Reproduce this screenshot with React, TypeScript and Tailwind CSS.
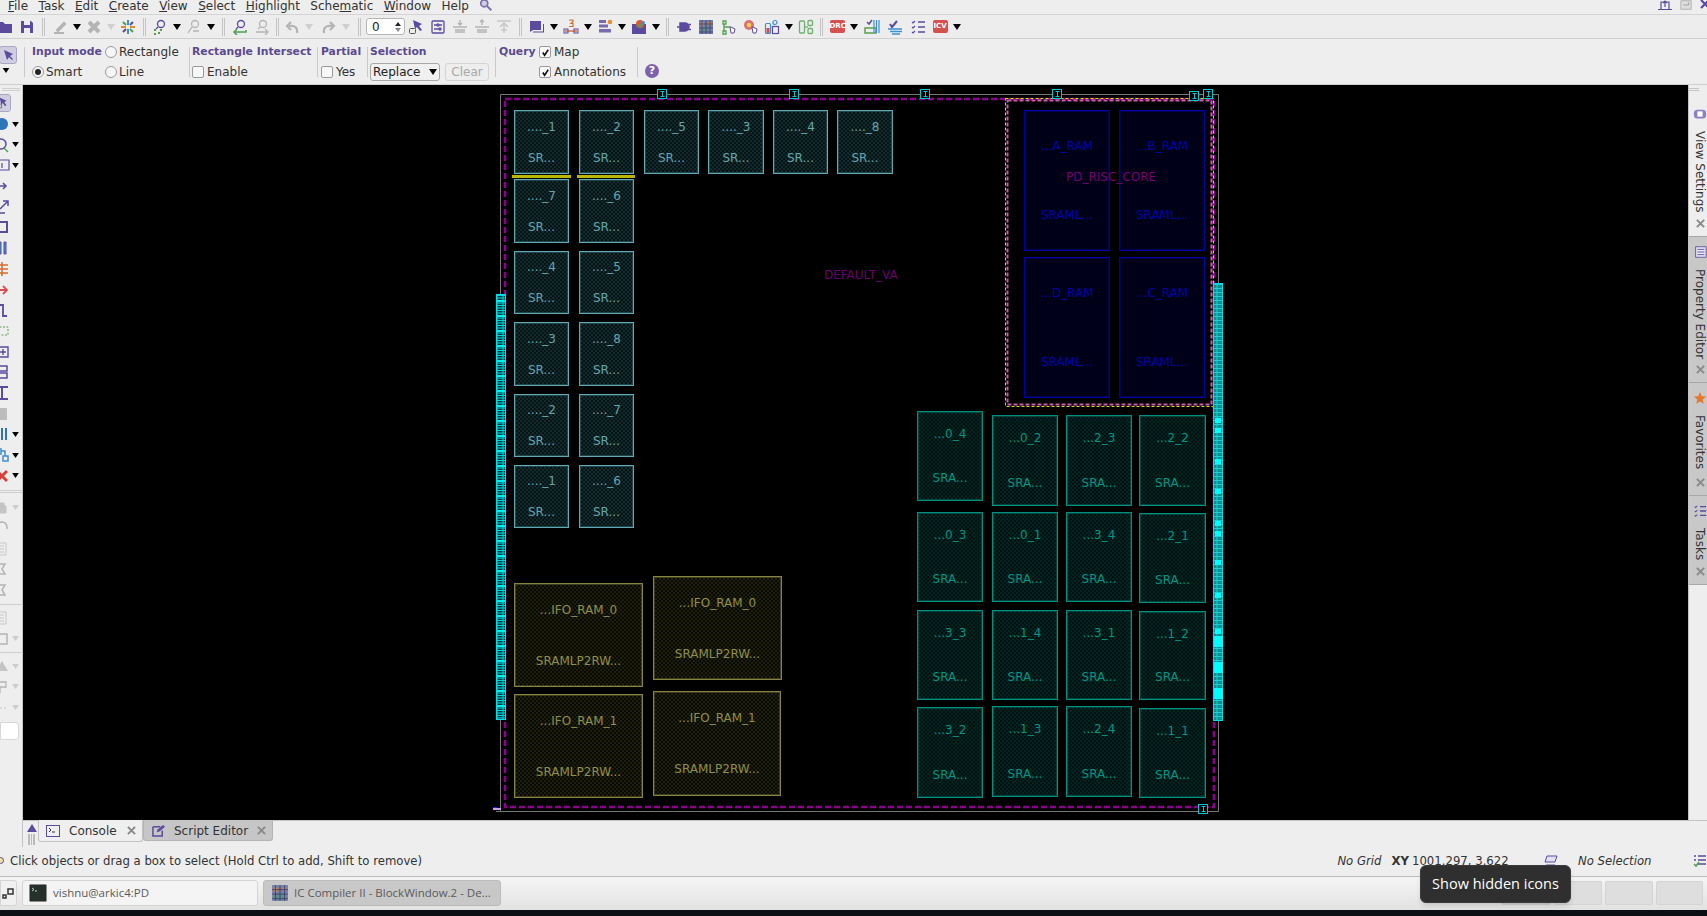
import React from 'react';

const P = '#5b4a9e';
const G = '#b4b4b4';

type Macro = { x: number; y: number; x2: number; y2: number; top: string };

const KIND = {
  sr: {
    box: 'border-[#62a9b3] shadow-[inset_0_0_0_1px_#1f454b] bg-[#061416] bg-[radial-gradient(circle,#3f7a82_0.55px,transparent_0.75px),radial-gradient(circle,#3f7a82_0.55px,transparent_0.75px)] bg-[length:4px_4px] bg-[position:0_0,2px_2px] text-[#62a6af]',
    bottom: 'SR...',
  },
  sra: {
    box: 'border-[#008f80] shadow-[inset_0_0_0_1px_#00443c] bg-[#001210] bg-[radial-gradient(circle,#006a5e_0.55px,transparent_0.75px),radial-gradient(circle,#006a5e_0.55px,transparent_0.75px)] bg-[length:4px_4px] bg-[position:0_0,2px_2px] text-[#009584]',
    bottom: 'SRA...',
  },
  ram: {
    box: 'border-[#0000a6] shadow-[inset_0_0_0_1px_#000050] bg-[#00000e] bg-[radial-gradient(circle,#000060_0.55px,transparent_0.75px),radial-gradient(circle,#000060_0.55px,transparent_0.75px)] bg-[length:4px_4px] bg-[position:0_0,2px_2px] text-[#0000b0]',
    bottom: 'SRAML...',
  },
  fifo: {
    box: 'border-[#85853f] shadow-[inset_0_0_0_1px_#3c3c1c] bg-[#0a0a04] bg-[radial-gradient(circle,#6a6a32_0.55px,transparent_0.75px),radial-gradient(circle,#6a6a32_0.55px,transparent_0.75px)] bg-[length:4px_4px] bg-[position:0_0,2px_2px] text-[#8f8f48]',
    bottom: 'SRAMLP2RW...',
  },
};

const m = (x: number, y: number, x2: number, y2: number, top: string): Macro => ({ x, y, x2, y2, top });

const SR_MACROS = [
  m(514, 110, 568, 173, '...._1'),
  m(579, 110, 633, 173, '...._2'),
  m(644, 110, 698, 173, '...._5'),
  m(708, 110, 763, 173, '...._3'),
  m(773, 110, 827, 173, '...._4'),
  m(837, 110, 892, 173, '...._8'),
  m(514, 179, 568, 242, '...._7'),
  m(579, 179, 633, 242, '...._6'),
  m(514, 251, 568, 313, '...._4'),
  m(579, 251, 633, 313, '...._5'),
  m(514, 322, 568, 385, '...._3'),
  m(579, 322, 633, 385, '...._8'),
  m(514, 394, 568, 456, '...._2'),
  m(579, 394, 633, 456, '...._7'),
  m(514, 465, 568, 527, '...._1'),
  m(579, 465, 633, 527, '...._6'),
];

const SRA_MACROS = [
  m(917, 411, 982, 500, '...0_4'),
  m(992, 415, 1057, 505, '...0_2'),
  m(1066, 415, 1131, 505, '...2_3'),
  m(1139, 415, 1205, 505, '...2_2'),
  m(917, 512, 982, 601, '...0_3'),
  m(992, 512, 1057, 601, '...0_1'),
  m(1066, 512, 1131, 601, '...3_4'),
  m(1139, 513, 1205, 602, '...2_1'),
  m(917, 610, 982, 699, '...3_3'),
  m(992, 610, 1057, 699, '...1_4'),
  m(1066, 610, 1131, 699, '...3_1'),
  m(1139, 611, 1205, 699, '...1_2'),
  m(917, 707, 982, 797, '...3_2'),
  m(992, 706, 1057, 796, '...1_3'),
  m(1066, 706, 1131, 796, '...2_4'),
  m(1139, 708, 1205, 797, '...1_1'),
];

const RAM_MACROS = [
  m(1024, 110, 1109, 250, '...A_RAM'),
  m(1119, 110, 1204, 250, '...B_RAM'),
  m(1024, 257, 1109, 397, '...D_RAM'),
  m(1119, 257, 1204, 397, '...C_RAM'),
];

const FIFO_MACROS = [
  m(514, 583, 642, 686, '...IFO_RAM_0'),
  m(653, 576, 781, 679, '...IFO_RAM_0'),
  m(514, 694, 642, 797, '...IFO_RAM_1'),
  m(653, 691, 780, 795, '...IFO_RAM_1'),
];

const TERMINALS = [
  [662, 94],
  [794, 94],
  [925, 94],
  [1057, 94],
  [1194, 96],
  [1208, 94],
  [1203, 809],
];

const RIGHT_DOTS = [418, 428, 459, 489, 521, 531, 560, 593, 629];
const LEFT_BARS = Array.from({ length: 28 }, (_, i) => 300 + i * 15);

function MacroBox({ macro, kind }: { macro: Macro; kind: keyof typeof KIND }) {
  return (
    <div
      className={`absolute flex flex-col items-center justify-around border text-[12px] leading-none whitespace-nowrap ${KIND[kind].box}`}
      style={{ left: macro.x - 23, top: macro.y - 85, width: macro.x2 - macro.x + 1, height: macro.y2 - macro.y + 1 }}
    >
      <span>{macro.top}</span>
      <span>{KIND[kind].bottom}</span>
    </div>
  );
}

function Floorplan() {
  return (
    <svg viewBox="23 85 1665 735" className="absolute inset-0 w-[1665px] h-[735px]">
      <defs>
        <pattern id="stripL" width="10" height="5" patternUnits="userSpaceOnUse">
          <rect width="10" height="5" fill="#04383c" />
          <path d="M0 .5H10M0 3H10M3 0V5M7 0V5" stroke="#00d8e0" strokeWidth="1" />
        </pattern>
        <pattern id="stripR" width="10" height="4" patternUnits="userSpaceOnUse">
          <rect width="10" height="4" fill="#08908f" />
          <path d="M0 .5H10M3 0V4M7 0V4" stroke="#10d4d8" strokeWidth="1" />
        </pattern>
      </defs>
      <path d="M500.5 294V94.5H1218.5V283M1218.5 721V811.5H496M500.5 720V811" fill="none" stroke="#777" />
      <rect x="505" y="99" width="709" height="708" fill="none" stroke="#8c0090" strokeWidth="2.6" strokeDasharray="6 3" />
      <rect x="1005.5" y="98.5" width="208" height="308" fill="none" stroke="#d8d800" strokeDasharray="3 2" />
      <rect x="1007.5" y="100.5" width="204" height="304" fill="none" stroke="#c85ca8" strokeWidth="2" strokeDasharray="4 2" />
      <rect x="512" y="175" width="59" height="3" fill="#b8b800" />
      <rect x="577" y="175" width="58" height="3" fill="#b8b800" />
      <rect x="493" y="808" width="8" height="2" fill="#c8a0e8" />
      <rect x="493" y="807" width="4" height="1" fill="#2020e0" />
      <rect x="496.5" y="294.5" width="9" height="425" fill="url(#stripL)" stroke="#00e0e8" />
      {LEFT_BARS.map((y) => (
        <rect key={y} x="497" y={y} width="8" height="2" fill="#00f0f0" />
      ))}
      <rect x="1213.5" y="283.5" width="9" height="437" fill="url(#stripR)" stroke="#00e0e8" />
      {RIGHT_DOTS.map((y) => (
        <rect key={y} x="1215" y={y} width="6" height="5" fill="#00ffff" />
      ))}
      <rect x="1214" y="636" width="9" height="11" fill="#00ffff" />
      <rect x="1214" y="662" width="9" height="11" fill="#00ffff" />
      <rect x="1214" y="688" width="9" height="11" fill="#00ffff" />
      {TERMINALS.map(([x, y]) => (
        <g key={`${x}-${y}`} fill="none" stroke="#00c8d0">
          <rect x={x - 4.5} y={y - 4.5} width="9" height="9" fill="#000" />
          <path d={`M${x - 1.5} ${y - 2.5}H${x + 2.5}M${x + 0.5} ${y - 2.5}V${y + 2.5}M${x - 1.5} ${y + 2.5}H${x + 2.5}`} />
        </g>
      ))}
    </svg>
  );
}

function Canvas() {
  return (
    <div className="relative flex-1 bg-black overflow-hidden font-['DejaVu_Sans',sans-serif]">
      {FIFO_MACROS.map((x, i) => <MacroBox key={i} macro={x} kind="fifo" />)}
      {SR_MACROS.map((x, i) => <MacroBox key={i} macro={x} kind="sr" />)}
      {SRA_MACROS.map((x, i) => <MacroBox key={i} macro={x} kind="sra" />)}
      {RAM_MACROS.map((x, i) => <MacroBox key={i} macro={x} kind="ram" />)}
      <Floorplan />
      <span className="absolute left-[801px] top-[181px] text-[12px] leading-[18px] text-[#6a006e]">DEFAULT_VA</span>
      <span className="absolute left-[1043px] top-[83px] text-[12px] leading-[18px] text-[#760076]">PD_RISC_CORE</span>
    </div>
  );
}

const ICONS: Record<string, React.ReactNode> = {
  folder: <path d="M1 3h5l2 2h7v9H1z" fill={P} />,
  save: <path d="M2 2h10l2 2v10H2zM5 2v4h6V2zM5 9v5h6V9z" fill={P} fillRule="evenodd" />,
  pencil: <path d="M2 14h10M5 11l7-7 1 1-7 7z" stroke={G} strokeWidth="2" fill="none" />,
  del: <path d="M3 3l10 10M13 3L3 13" stroke={G} strokeWidth="4" />,
  star: (
    <g strokeWidth="2">
      <path d="M8 1v5M8 10v5" stroke="#3f8fd0" />
      <path d="M1 8h5M10 8h5" stroke="#e08a30" />
      <path d="M3 3l3 3M10 10l3 3" stroke="#50a050" />
      <path d="M13 3l-3 3M6 10l-3 3" stroke={P} />
    </g>
  ),
  zoomDots: (
    <g>
      <circle cx="9" cy="5" r="3.5" fill="none" stroke={P} strokeWidth="1.3" />
      <path d="M6 8l-2 2" stroke={P} strokeWidth="1.3" />
      <path d="M2 10h2v2H2zM8 10h2v2H8zM2 14h2v2H2zM6 13h2v2H6z" fill="#4fa04f" />
    </g>
  ),
  zoomOff: (
    <g fill="none" stroke={G} strokeWidth="1.3">
      <circle cx="9" cy="5" r="3.5" />
      <path d="M6 8l-4 6M7 12h6" />
    </g>
  ),
  zoomBack: (
    <g fill="none">
      <circle cx="9" cy="5" r="3.5" stroke={P} strokeWidth="1.3" />
      <path d="M6 8l-2 2" stroke={P} strokeWidth="1.3" />
      <path d="M14 11v2H3M5 10l-3 3 3 3" stroke="#4fa04f" strokeWidth="1.5" />
    </g>
  ),
  zoomBackOff: (
    <g fill="none" stroke={G} strokeWidth="1.3">
      <circle cx="9" cy="5" r="3.5" />
      <path d="M6 8l-2 2M2 13h11M11 10l3 3-3 3" />
    </g>
  ),
  undo: <path d="M13 14c1-5-2-8-8-7M7 3L3 7l4 4" fill="none" stroke={G} strokeWidth="2.2" />,
  redo: <path d="M3 14C2 9 5 6 11 7M9 3l4 4-4 4" fill="none" stroke={G} strokeWidth="2.2" />,
  pick: (
    <g>
      <rect x="1.5" y="9.5" width="6" height="5" rx="1" fill="none" stroke="#555" />
      <path d="M5 1l9 4-3 2 3 4-2 1-3-4-2 2z" fill={P} />
    </g>
  ),
  panel: (
    <g fill="none" stroke={P} strokeWidth="1.3">
      <rect x="2" y="2" width="12" height="12" rx="1" />
      <path d="M4 6h3M9 6h3M4 10h5" />
      <circle cx="8" cy="6" r="1" />
      <circle cx="10" cy="10" r="1" />
    </g>
  ),
  alignV: <path d="M1 8h14M3 11h10M3 13h10M8 1v5M6 4l2 2 2-2" fill="none" stroke={G} strokeWidth="1.4" />,
  alignU: <path d="M1 8h14M3 11h10M3 13h10M8 6V1M6 3l2-2 2 2" fill="none" stroke={G} strokeWidth="1.4" />,
  alignT: <path d="M1 2h14M8 14V4M4 8l4-4 4 4M5 11h6" fill="none" stroke="#c8c8c8" strokeWidth="1.6" />,
  chat: (
    <g fill={P}>
      <path d="M1 2h11v9H4l-3 2z" />
      <path d="M4 13.500h11V5h-1v7.500H4z" />
    </g>
  ),
  ruler: (
    <g fill="none">
      <path d="M2 12h12" stroke="#d86a30" strokeWidth="1.4" />
      <rect x="1" y="10" width="4" height="4" stroke={P} />
      <rect x="11" y="10" width="4" height="4" stroke={P} />
      <path d="M6 1h4v1.500L8 4.500h2v3H6" stroke="#d86a30" strokeWidth="1.2" />
    </g>
  ),
  bars: (
    <g>
      <path d="M2 1h7v3H2zM2 5.500h9v3H2zM2 10h12v3.500H2z" fill={P} opacity="0.8" />
      <circle cx="13" cy="3" r="2.3" fill="#e8902c" />
    </g>
  ),
  camera: (
    <g>
      <path d="M1 5h14v10H1z" fill={P} />
      <circle cx="9" cy="5" r="4" fill="#e05a30" />
      <circle cx="12" cy="4" r="2" fill="#3f8fd0" />
      <circle cx="9" cy="7" r="2" fill="#50a050" />
    </g>
  ),
  plug: <path d="M1 8h3M4 4h5a4 4 0 010 8H4zM12 5.500h3M12 10.500h3" fill={P} stroke={P} strokeWidth="1.5" />,
  grid: (
    <g>
      <rect x="1" y="1" width="14" height="14" fill="#6f7fa8" />
      <path d="M3 3h3v4H3zM10 3h3v3h-3z" fill="#d8803a" />
      <path d="M7 8h3v5H7zM3 10h2v3H3z" fill="#4f9a60" />
      <path d="M4 1v14M8 1v14M12 1v14M1 5h14M1 9h14M1 13h14" stroke="#3f3a68" strokeWidth="0.7" />
    </g>
  ),
  hand: (
    <g fill="none">
      <path d="M3 2h3v3H3zM3 12h3v3H3z" stroke="#4fa04f" strokeWidth="1.3" />
      <path d="M4 5v7M4 8h6" stroke="#4fa04f" strokeWidth="1.3" />
      <path d="M10 8l1 6h3l1-4-4-2z" fill="#fff" stroke={P} />
    </g>
  ),
  burst: (
    <g>
      <circle cx="7" cy="6" r="5" fill="#d85a5a" opacity="0.85" />
      <circle cx="7" cy="6" r="2.2" fill="#f2d24a" />
      <path d="M10 8l1 6h3l1-4-4-2z" fill="#fff" stroke={P} />
    </g>
  ),
  bottle: (
    <g fill="none" strokeWidth="1.2">
      <rect x="1.5" y="4.500" width="5" height="10" rx="1" stroke="#3f8fd0" />
      <rect x="2.5" y="9" width="3" height="5" fill="#d84a4a" />
      <rect x="9" y="1.500" width="4" height="4" rx="2" stroke="#3f8fd0" />
      <rect x="8.5" y="7.500" width="6" height="7" stroke={P} />
    </g>
  ),
  tree: (
    <g fill="none" stroke="#6fb06f" strokeWidth="1.3">
      <rect x="1.5" y="2" width="5" height="12" rx="1" />
      <rect x="10" y="1.500" width="4.500" height="5" rx="1" />
      <rect x="10" y="9.500" width="4.500" height="5" rx="1" />
      <path d="M7 8h3" />
    </g>
  ),
  layersCheck: (
    <g fill="none">
      <path d="M1 9h11v5H1z" stroke="#5aa04f" strokeWidth="1.5" />
      <path d="M3 3l2 2 3-4" stroke={P} strokeWidth="1.5" />
      <path d="M10 1v13M12.500 1v13M15 1v13" stroke="#3f8fd0" strokeWidth="1.2" />
    </g>
  ),
  layersDone: (
    <g fill="none">
      <path d="M3 5l2 3 5-6" stroke={P} strokeWidth="2" />
      <path d="M1 10h14M3 12.500h12M5 15h8" stroke="#3f8fd0" strokeWidth="1.6" />
    </g>
  ),
  tasks: (
    <g fill="none" stroke={P} strokeWidth="1.2">
      <path d="M2 3l1 1 2-2M2 8l1 1 2-2M2 13l1 1 2-2" />
      <path d="M8 3h7M8 8h7M8 13h7" strokeWidth="1.5" />
    </g>
  ),
  bubble: <path d="M8 2a6 6 0 100 12A6 6 0 008 2z" fill="#2e74b8" />,
  zoom: (
    <g fill="none" stroke={P} strokeWidth="1.5">
      <circle cx="7" cy="7" r="5" />
      <path d="M10 11l4 4" stroke="#4fa04f" />
    </g>
  ),
  info: <path d="M1 3h14v10H1zM8 6v5" fill="none" stroke={P} strokeWidth="1.2" />,
  dotArrow: <path d="M2 8h10M9 5l3 3-3 3" fill="none" stroke={P} strokeWidth="1.5" />,
  expand: <path d="M2 5v9h9M6 10l8-8M9 2h5v5" fill="none" stroke={P} strokeWidth="1.5" />,
  box: <rect x="3" y="3" width="10" height="10" fill="none" stroke={P} strokeWidth="2" />,
  split: <path d="M2 2h5v12H2zM10 2h2v12h-2z" fill="#3f8fd0" stroke={P} />,
  stack: <path d="M2 4h12M2 8h12M2 12h12M8 1v14" stroke="#d86a30" strokeWidth="1.5" />,
  push: <path d="M1 8h12M9 4l4 4-4 4" fill="none" stroke="#d84f4f" strokeWidth="1.8" />,
  steps: <path d="M3 14V3h6v11h4" fill="none" stroke={P} strokeWidth="1.8" />,
  dashed: <rect x="2" y="4" width="12" height="8" fill="none" stroke="#5aa04f" strokeDasharray="2 1.5" />,
  add: <path d="M2 3h12v10H2zM6 8h6M9 5v6" fill="none" stroke={P} strokeWidth="1.4" />,
  rack: <path d="M3 2h10v5H3zM3 9h10v5H3z" fill="none" stroke={P} strokeWidth="1.5" />,
  pillar: <path d="M2 2h12M2 14h12M8 2v12" fill="none" stroke={P} strokeWidth="2" />,
  block: <rect x="3" y="2" width="10" height="12" fill="#bdbdbd" />,
  columns: <path d="M4 2v12M8 2v12M12 2v12" stroke="#2e74b8" strokeWidth="2" />,
  tree2: <path d="M2 2h5v5H2zM9 9h5v5H9zM7 4h4v5" fill="none" stroke="#3f8fd0" strokeWidth="1.5" />,
  redX: <path d="M3 3l10 10M13 3L3 13" stroke="#d8403a" strokeWidth="3" />,
  lock: <path d="M4 7h8v7H4zM6 7V4h4v3" fill="#c4c4c4" stroke="#c4c4c4" />,
  arc: <path d="M3 14V7a5 5 0 0110 0v2" fill="none" stroke={G} strokeWidth="1.5" />,
  doc: <path d="M4 2h8v12H4zM6 5h4M6 8h4M6 11h4" fill="none" stroke="#c8c8c8" />,
  hook: <path d="M5 3h6l-3 5 3 5H5" fill="none" stroke={G} strokeWidth="1.5" />,
  sq: <rect x="3" y="3" width="10" height="10" fill="none" stroke={G} strokeWidth="1.5" />,
  tri: <path d="M8 3l6 10H2z" fill="#c4c4c4" />,
  flag: <path d="M3 3h9v5H6v6" fill="none" stroke={G} strokeWidth="1.3" />,
  dots: <path d="M2 8h12" stroke="#c8c8c8" strokeDasharray="2 2" />,
};

function Ico({ n, size = 16 }: { n: string; size?: number }) {
  return (
    <svg viewBox="0 0 16 16" width={size} height={size} className="shrink-0">
      {ICONS[n]}
    </svg>
  );
}

const T = ({ n, wide }: { n: string; wide?: boolean }) => (
  <div className={`flex justify-center shrink-0 ${wide ? 'w-[23px]' : 'w-[22px]'}`}>
    <Ico n={n} />
  </div>
);

const Dd = ({ off }: { off?: boolean }) => (
  <div className="w-[12px] flex justify-center shrink-0">
    <svg viewBox="0 0 8 6" className="w-2 h-[6px]">
      <path d="M0 0h8L4 6z" fill={off ? '#cfcfcf' : '#000'} />
    </svg>
  </div>
);

const Sep = ({ className }: { className: string }) => (
  <div className={`flex justify-center shrink-0 ${className}`}>
    <div className="w-[3px] h-[18px] border-x border-[#c4c4c4]" />
  </div>
);

const Label = ({ text }: { text: React.ReactNode }) => <span className="text-[#333] whitespace-nowrap">{text}</span>;

const Radio = ({ on }: { on?: boolean }) => (
  <span className="w-3 h-3 rounded-full border border-[#9a9a9a] bg-[#f6f6f6] flex items-center justify-center shrink-0">
    {on && <span className="w-[6px] h-[6px] rounded-full bg-[#222]" />}
  </span>
);

const Check = ({ on }: { on?: boolean }) => (
  <span className="w-3 h-3 rounded-[2px] border border-[#9a9a9a] bg-[#f8f8f8] flex items-center justify-center shrink-0">
    {on && (
      <svg viewBox="0 0 10 10" className="w-[9px] h-[9px]">
        <path d="M2 5l2 3 4-6" fill="none" stroke="#111" strokeWidth="1.8" />
      </svg>
    )}
  </span>
);

const Head = ({ children }: { children: React.ReactNode }) => (
  <span className="font-bold text-[10.8px] whitespace-nowrap text-[#5b4a8f]">{children}</span>
);

const VDiv = () => <div className="w-px h-[30px] self-center bg-[#c9c9c9] shrink-0" />;

const MENUS: [string, string, string][] = [
  ['', 'F', 'ile'],
  ['', 'T', 'ask'],
  ['', 'E', 'dit'],
  ['', 'C', 'reate'],
  ['', 'V', 'iew'],
  ['', 'S', 'elect'],
  ['', 'H', 'ighlight'],
  ['Sche', 'm', 'atic'],
  ['', 'W', 'indow'],
];

function MenuBar() {
  return (
    <div className="relative h-[15px] shrink-0 bg-[#eeeeee] border-b border-[#d4d4d4] flex items-center pl-2 gap-[10.5px] overflow-hidden">
      {MENUS.map(([a, b, c]) => (
        <span key={a + b + c} className="text-[#333] leading-none -mt-[3px]">
          {a}
          <u>{b}</u>
          {c}
        </span>
      ))}
      <span className="text-[#333] leading-none -mt-[3px]">Help</span>
      <svg viewBox="0 0 16 16" className="w-[14px] h-[14px] -mt-[4px]">
        <circle cx="6" cy="6" r="4" fill="#cfcfe0" stroke="#7b6fae" strokeWidth="2" />
        <path d="M9 9l5 5" stroke="#7b6fae" strokeWidth="2.4" />
      </svg>
      <div className="absolute right-0 top-0 flex items-start gap-[8px] -mr-[3px]">
        <svg viewBox="0 0 14 10" className="w-[14px] h-[10px]">
          <path d="M0 9.500h14M3 9V2h8v7M7 7V1M5 3l2-2 2 2" fill="none" stroke={P} strokeWidth="1.2" />
        </svg>
        <svg viewBox="0 0 14 10" className="w-[12px] h-[10px]">
          <path d="M1 0h12v10H1z" fill="#ddd" stroke="#aaa" />
          <path d="M4 5h6V2" fill="none" stroke="#999" />
        </svg>
        <svg viewBox="0 0 10 10" className="w-[10px] h-[10px]">
          <path d="M1 0l8 8M9 0L1 8" stroke={P} strokeWidth="2.2" />
        </svg>
      </div>
    </div>
  );
}

function Toolbar() {
  return (
    <div className="h-[24px] shrink-0 bg-[#ededed] border-b border-[#cfcfcf] flex items-center overflow-hidden">
      <div className="-ml-[6px] flex items-center">
        <T n="folder" />
        <T n="save" />
      </div>
      <Sep className="w-[11px]" />
      <T n="pencil" />
      <Dd />
      <T n="del" />
      <Dd off />
      <T n="star" />
      <Sep className="w-[10px]" />
      <T n="zoomDots" />
      <Dd />
      <T n="zoomOff" />
      <Dd />
      <Sep className="w-[12px]" />
      <T n="zoomBack" />
      <T n="zoomBackOff" />
      <Sep className="w-[8px]" />
      <T n="undo" />
      <Dd off />
      <div className="w-[3px] shrink-0" />
      <T n="redo" />
      <Dd off />
      <Sep className="w-[14px]" />
      <div className="w-[39px] h-[17px] bg-white border border-[#b5b5b5] rounded-[3px] flex items-center justify-between pl-[5px] pr-[3px] shrink-0 text-[#222]">
        <span>0</span>
        <span className="flex flex-col gap-[2px]">
          <svg viewBox="0 0 6 4" className="w-[6px] h-[4px]"><path d="M3 0l3 4H0z" fill="#222" /></svg>
          <svg viewBox="0 0 6 4" className="w-[6px] h-[4px]"><path d="M0 0h6L3 4z" fill="#888" /></svg>
        </span>
      </div>
      <T n="pick" />
      <T n="panel" />
      <T n="alignV" />
      <T n="alignU" />
      <T n="alignT" />
      <Sep className="w-[11px]" />
      <T n="chat" />
      <Dd />
      <T n="ruler" />
      <Dd />
      <T n="bars" />
      <Dd />
      <T n="camera" />
      <Dd />
      <Sep className="w-[11px]" />
      <T n="plug" />
      <T n="grid" />
      <T n="hand" />
      <T n="burst" />
      <T n="bottle" />
      <Dd />
      <T n="tree" />
      <Sep className="w-[9px]" />
      <div className="w-[22px] flex justify-center shrink-0">
        <span className="w-[15px] h-[13px] bg-[#d84f4f] rounded-[2px] text-[7px] leading-[13px] text-center text-white font-bold">DRC</span>
      </div>
      <Dd />
      <T n="layersCheck" wide />
      <T n="layersDone" wide />
      <T n="tasks" wide />
      <div className="w-[22px] flex justify-center shrink-0">
        <span className="w-[15px] h-[13px] bg-[#d84f4f] rounded-[2px] text-[7px] leading-[13px] text-center text-white font-bold">ICV</span>
      </div>
      <Dd />
    </div>
  );
}

function OptionsBar() {
  return (
    <div className="h-[46px] shrink-0 bg-[#eeeeee] border-b border-[#cfcfcf] flex items-stretch">
      <div className="w-[24px] flex flex-col items-start shrink-0 pt-[7px]">
        <div className="w-[18px] h-[18px] -ml-[1px] bg-[#cfcde0] border border-[#a9a6c4] rounded-[3px] flex items-center justify-center">
          <svg viewBox="0 0 12 12" className="w-3 h-3"><path d="M2 1l9 4-3 2 3 3-1 1-3-3-2 3z" fill={P} /></svg>
        </div>
        <svg viewBox="0 0 8 6" className="w-2 h-[5px] ml-[2px] mt-[4px]"><path d="M0 0h8L4 6z" fill="#000" /></svg>
      </div>
      <VDiv />
      <div className="w-[164px] shrink-0 pl-[7px] pt-[3px] grid grid-cols-[73px_1fr] grid-rows-[20px_20px] items-center">
        <Head>Input mode</Head>
        <span className="flex items-center gap-[2px]"><Radio /><Label text="Rectangle" /></span>
        <span className="flex items-center gap-[2px]"><Radio on /><Label text="Smart" /></span>
        <span className="flex items-center gap-[2px]"><Radio /><Label text="Line" /></span>
      </div>
      <VDiv />
      <div className="w-[127px] shrink-0 pl-[2px] pt-[3px] grid grid-rows-[20px_20px] items-center">
        <Head>Rectangle Intersect</Head>
        <span className="flex items-center gap-[3px]"><Check /><Label text="Enable" /></span>
      </div>
      <VDiv />
      <div className="w-[49px] shrink-0 pl-[3px] pt-[3px] grid grid-rows-[20px_20px] items-center">
        <Head>Partial</Head>
        <span className="flex items-center gap-[3px]"><Check /><Label text="Yes" /></span>
      </div>
      <VDiv />
      <div className="w-[127px] shrink-0 pl-[2px] pt-[3px] grid grid-rows-[20px_20px] items-center">
        <Head>Selection</Head>
        <div className="flex items-center gap-[5px]">
          <div className="w-[70px] h-[18px] bg-[#f0f0f0] border border-[#a8a8a8] rounded-[3px] flex items-center justify-between px-[2px] text-[#222]">
            <span>Replace</span>
            <svg viewBox="0 0 8 6" className="w-2 h-[6px]"><path d="M0 0h8L4 6z" fill="#000" /></svg>
          </div>
          <div className="w-[44px] h-[18px] border border-[#d4d4d4] rounded-[3px] flex items-center justify-center text-[#a8a8a8]">Clear</div>
        </div>
      </div>
      <VDiv />
      <div className="w-[141px] shrink-0 pl-[3px] pt-[3px] grid grid-cols-[40px_1fr] grid-rows-[20px_20px] items-center">
        <Head>Query</Head>
        <span className="flex items-center gap-[3px]"><Check on /><Label text="Map" /></span>
        <span />
        <span className="flex items-center gap-[3px]"><Check on /><Label text="Annotations" /></span>
      </div>
      <VDiv />
      <div className="pl-[7px] pt-[25px]">
        <span className="w-[14px] h-[14px] rounded-full bg-[#7d62ab] text-white text-[11px] leading-[14px] font-bold flex items-center justify-center">?</span>
      </div>
    </div>
  );
}

const LeftTool = ({ n, dd, active, off }: { n: string; dd?: boolean; active?: boolean; off?: boolean }) => (
  <div className="h-[20.7px] shrink-0 flex items-center -ml-[6px] gap-[3px]">
    <span className={`w-[16px] h-[16px] shrink-0 flex items-center justify-center ${active ? 'bg-[#cfcde0] outline outline-[#a9a6c4] rounded-[2px]' : ''}`}>
      <Ico n={n} size={active ? 12 : 16} />
    </span>
    {dd && (
      <svg viewBox="0 0 8 6" className="w-[7px] h-[5px] ml-[-1px]">
        <path d="M0 0h8L4 6z" fill={off ? '#cccccc' : '#000'} />
      </svg>
    )}
  </div>
);

function LeftBar() {
  return (
    <div className="w-[23px] shrink-0 bg-[#eeeeee] border-r border-[#c4c4c4] flex flex-col overflow-hidden">
      <div className="h-[3px] mx-[2px] mt-[3px] mb-[2px] border-y border-[#d0d0d0] shrink-0" />
      <LeftTool n="pick" active />
      <LeftTool n="bubble" dd />
      <LeftTool n="zoom" dd />
      <LeftTool n="info" dd />
      <LeftTool n="dotArrow" />
      <LeftTool n="expand" />
      <LeftTool n="box" />
      <LeftTool n="split" />
      <LeftTool n="stack" />
      <LeftTool n="push" />
      <LeftTool n="steps" />
      <LeftTool n="dashed" />
      <LeftTool n="add" />
      <LeftTool n="rack" />
      <LeftTool n="pillar" />
      <LeftTool n="block" />
      <LeftTool n="columns" dd />
      <LeftTool n="tree2" dd />
      <LeftTool n="redX" dd />
      <div className="h-[3px] my-[4px] border-y border-[#cfcfcf] shrink-0" />
      <LeftTool n="lock" dd off />
      <LeftTool n="arc" />
      <LeftTool n="doc" />
      <LeftTool n="hook" />
      <LeftTool n="hook" />
      <div className="h-px my-[3px] bg-[#cfcfcf] shrink-0" />
      <LeftTool n="doc" />
      <LeftTool n="sq" dd off />
      <div className="h-px my-[3px] bg-[#cfcfcf] shrink-0" />
      <LeftTool n="tri" dd off />
      <LeftTool n="flag" dd off />
      <LeftTool n="dots" dd off />
      <div className="h-[18px] w-[19px] mt-[4px] bg-white rounded-r-[3px] border border-[#d8d8d8] shrink-0" />
    </div>
  );
}

const SideTab = ({
  icon,
  label,
  active,
  className,
}: {
  icon: React.ReactNode;
  label: string;
  active?: boolean;
  className: string;
}) => (
  <div className={`flex flex-col items-center shrink-0 pl-1 border-b border-[#a8a8a8] ${active ? 'bg-[#eeeeee]' : 'bg-[#c8c8c8]'} ${className}`}>
    <div className="mt-[7px] h-[16px] flex items-center justify-center">{icon}</div>
    <span className="mt-[9px] [writing-mode:vertical-rl] text-[#333] leading-[16px] whitespace-nowrap">{label}</span>
    <svg viewBox="0 0 10 10" className="w-[9px] h-[9px] mt-auto mb-[8px]">
      <path d="M1 1l8 8M9 1L1 9" stroke="#8a8a8a" strokeWidth="2.2" />
    </svg>
  </div>
);

function RightBar() {
  return (
    <div className="w-[19px] shrink-0 bg-[#eeeeee] border-l border-[#c4c4c4] flex flex-col overflow-hidden">
      <div className="h-[3px] w-[10px] mt-[3px] mb-[8px] border-y border-[#c4c4c4]" />
      <SideTab
        active
        className="h-[138px]"
        label="View Settings"
        icon={<svg viewBox="0 0 16 16" className="w-[14px] h-[14px]"><rect x="1" y="3" width="14" height="10" rx="4" fill="#8d7fc0" /><rect x="5" y="5" width="6" height="6" fill="#fff" /></svg>}
      />
      <SideTab
        className="h-[146px]"
        label="Property Editor"
        icon={<svg viewBox="0 0 16 16" className="w-[14px] h-[14px]"><path d="M3 2h12v12H3z" fill="#e8e6f2" stroke={P} /><path d="M5 5h8M5 8h8M5 11h8" stroke={P} /></svg>}
      />
      <SideTab
        className="h-[113px]"
        label="Favorites"
        icon={<svg viewBox="0 0 16 16" className="w-[14px] h-[14px]"><path d="M8 1l2 5 5 .4-4 3.300 1.300 5L8 12l-4.300 2.700L5 9.700 1 6.400 6 6z" fill="#e8762c" /></svg>}
      />
      <SideTab
        className="h-[89px]"
        label="Tasks"
        icon={<Ico n="tasks" size={14} />}
      />
    </div>
  );
}

function TabsRow() {
  return (
    <div className="relative h-[27px] shrink-0 bg-[#eeeeee] border-t border-[#c4c4c4] flex items-start pl-[2px]">
      <div className="w-[13px] mt-[3px] flex flex-col items-center gap-[2px] shrink-0">
        <svg viewBox="0 0 10 8" className="w-[10px] h-2"><path d="M5 0l5 8H0z" fill={P} /></svg>
        <div className="w-[7px] h-[11px] border-x border-[#bbb] bg-[repeating-linear-gradient(90deg,#bbb_0_1px,transparent_1px_2px)]" />
      </div>
      <div className="w-[105px] h-[22px] -mt-px bg-[#efefef] border border-t-0 border-[#c4c4c4] rounded-b-[3px] flex items-center shrink-0">
        <svg viewBox="0 0 14 12" className="w-[14px] h-3 ml-[7px]">
          <rect x=".5" y=".5" width="13" height="11" fill="none" stroke={P} />
          <path d="M3 3l2 2-2 2M6 7h3" fill="none" stroke="#333" />
        </svg>
        <span className="ml-[9px] text-[#333]">Console</span>
        <svg viewBox="0 0 10 10" className="w-[9px] h-[9px] ml-[10px]"><path d="M1 1l8 8M9 1L1 9" stroke="#8a8a8a" strokeWidth="2.2" /></svg>
      </div>
      <div className="w-[130px] h-[20px] bg-[#c6c6c6] border border-t-0 border-[#b4b4b4] rounded-b-[3px] flex items-center shrink-0">
        <svg viewBox="0 0 14 14" className="w-[13px] h-[13px] ml-[8px]">
          <path d="M1 3h8M1 3v10h10V7" fill="none" stroke={P} strokeWidth="1.6" />
          <path d="M5 9l1-3 6-5 2 2-6 5z" fill={P} />
        </svg>
        <span className="ml-[9px] text-[#333]">Script Editor</span>
        <svg viewBox="0 0 10 10" className="w-[9px] h-[9px] ml-[9px]"><path d="M1 1l8 8M9 1L1 9" stroke="#8a8a8a" strokeWidth="2.2" /></svg>
      </div>
    </div>
  );
}

function StatusBar() {
  return (
    <div className="h-[30px] pb-px shrink-0 bg-[#eeeeee] border-b border-[#bdbdbd] flex items-center text-[#333] text-[11.7px]">
      <svg viewBox="0 0 10 16" className="w-[5px] h-4 shrink-0 mr-[5px]">
        <circle cx="1" cy="7" r="6" fill="#f0e0a0" stroke={P} strokeWidth="2" />
      </svg>
      <span>Click objects or drag a box to select (Hold Ctrl to add, Shift to remove)</span>
      <span className="ml-auto italic">No Grid</span>
      <span className="ml-[10px] font-bold">XY</span>
      <span className="ml-[3px] w-[132px]">1001.297, 3.622</span>
      <svg viewBox="0 0 14 12" className="w-[14px] h-3 shrink-0">
        <path d="M3 1h10l-2 6H1z" fill="#e4e0f2" stroke={P} />
        <path d="M2 10h9" stroke={P} />
      </svg>
      <span className="ml-[20px] italic w-[115px]">No Selection</span>
      <svg viewBox="0 0 14 14" className="w-[14px] h-[14px] shrink-0">
        <path d="M1 2h2M5 2h8M1 6h2M5 6h8M5 10h8" stroke={P} strokeWidth="1.4" />
        <path d="M1 10l2 2 3-4" fill="none" stroke="#50a050" strokeWidth="1.5" />
      </svg>
    </div>
  );
}

function TaskBar() {
  return (
    <div className="h-[33px] pb-px shrink-0 bg-gradient-to-b from-[#f5f5f5] to-[#e2e2e2] flex items-center gap-[5px] font-['Open_Sans',sans-serif] text-[11.5px] text-[#5a5a5a]">
      <div className="w-[17px] h-[26px] bg-[#f0f0f0] border border-[#d4d4d4] rounded-r-[3px] flex items-center justify-end pr-[2px] shrink-0">
        <svg viewBox="0 0 12 12" className="w-3 h-3"><path d="M6 2h5v5H6zM1 8h3v3H1z" fill="none" stroke="#333" strokeWidth="1.5" /></svg>
      </div>
      <div className="w-[236px] h-[26px] bg-[#f4f4f4] border border-[#d4d4d4] rounded-[3px] flex items-center pl-[6px] gap-[6px] shrink-0">
        <svg viewBox="0 0 18 18" className="w-[18px] h-[18px] shrink-0">
          <rect x=".5" y=".5" width="17" height="17" rx="1" fill="#26302b" stroke="#8a8a8a" />
          <path d="M3 4l2 1.500L3 7M6 7h2" fill="none" stroke="#dfe" strokeWidth=".8" />
        </svg>
        <span>vishnu@arkic4:PD</span>
      </div>
      <div className="w-[238px] h-[26px] bg-[#c8c8c8] border border-[#bcbcbc] rounded-[3px] flex items-center pl-[7px] gap-[5px] shrink-0">
        <Ico n="grid" size={18} />
        <span className="whitespace-nowrap">IC Compiler II - BlockWindow.2 - De...</span>
      </div>
      <div className="ml-auto flex gap-[3px] pr-[4px]">
        <div className="w-[50px] h-[24px] bg-[#cfcfcf] rounded-[2px]" />
        <div className="w-[48px] h-[24px] bg-[#dedede] border border-[#d4d4d4] rounded-[2px]" />
        <div className="w-[48px] h-[24px] bg-[#dedede] border border-[#d4d4d4] rounded-[2px]" />
        <div className="w-[47px] h-[24px] bg-[#dedede] border border-[#d4d4d4] rounded-[2px]" />
      </div>
    </div>
  );
}

export default function App() {
  return (
    <div className="relative w-[1707px] h-[916px] overflow-hidden flex flex-col bg-[#0c1014] text-[12px] leading-[16px] font-['DejaVu_Sans',sans-serif]">
      <MenuBar />
      <Toolbar />
      <OptionsBar />
      <div className="h-[762px] shrink-0 flex bg-[#eeeeee]">
        <LeftBar />
        <div className="flex-1 flex flex-col min-w-0">
          <div className="h-[735px] shrink-0 flex">
            <Canvas />
            <RightBar />
          </div>
          <TabsRow />
        </div>
      </div>
      <StatusBar />
      <TaskBar />
      <div className="absolute left-[1420px] top-[865px] w-[151px] h-[38px] rounded-[6px] bg-[#2f2f2f] border border-[#3c3c3c] shadow-md text-white text-[14.5px] flex items-center justify-center font-['Open_Sans',sans-serif]">
        Show hidden icons
      </div>
    </div>
  );
}
